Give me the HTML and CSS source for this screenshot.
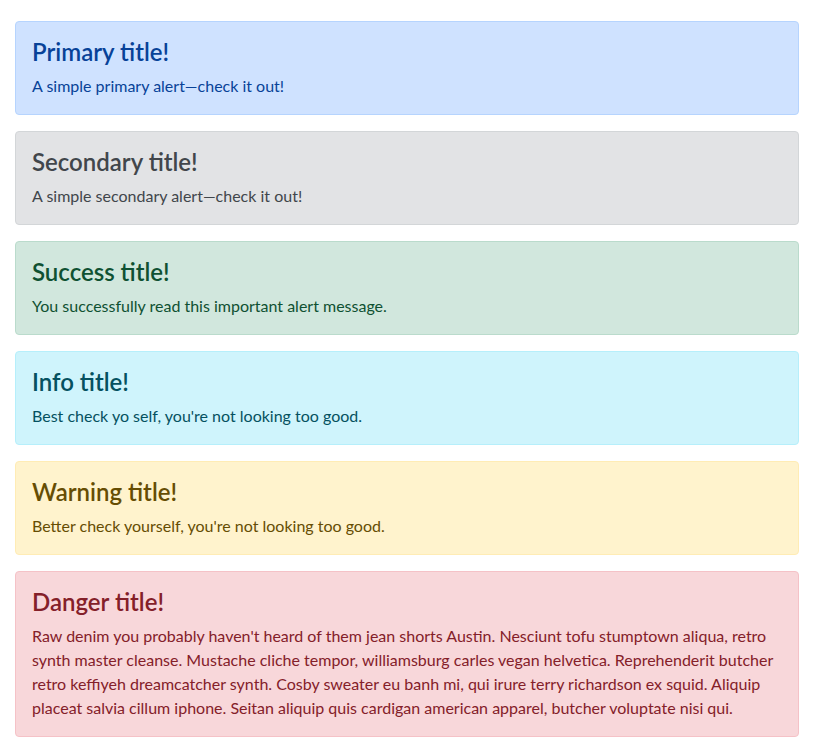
FILE: index.html
```html
<!DOCTYPE html>
<html lang="en">
<head>
<meta charset="utf-8">
<title>Alerts</title>
<link rel="stylesheet" href="styles.css">
</head>
<body>
<div class="container">
  <div class="alert alert-primary">
    <h4 class="alert-heading">Primary title!</h4>
    <p>A simple primary alert—check it out!</p>
  </div>
  <div class="alert alert-secondary">
    <h4 class="alert-heading">Secondary title!</h4>
    <p>A simple secondary alert—check it out!</p>
  </div>
  <div class="alert alert-success">
    <h4 class="alert-heading">Success title!</h4>
    <p>You successfully read this important alert message.</p>
  </div>
  <div class="alert alert-info">
    <h4 class="alert-heading">Info title!</h4>
    <p>Best check yo self, you're not looking too good.</p>
  </div>
  <div class="alert alert-warning">
    <h4 class="alert-heading">Warning title!</h4>
    <p>Better check yourself, you're not looking too good.</p>
  </div>
  <div class="alert alert-danger">
    <h4 class="alert-heading">Danger title!</h4>
    <p>Raw denim you probably haven't heard of them jean shorts Austin. Nesciunt tofu stumptown aliqua, retro synth master cleanse. Mustache cliche tempor, williamsburg carles vegan helvetica. Reprehenderit butcher retro keffiyeh dreamcatcher synth. Cosby sweater eu banh mi, qui irure terry richardson ex squid. Aliquip placeat salvia cillum iphone. Seitan aliquip quis cardigan american apparel, butcher voluptate nisi qui.</p>
  </div>
</div>
</body>
</html>
```

FILE: styles.css
```css
* { box-sizing: border-box; }
html, body { margin: 0; padding: 0; background: #fff; }
body {
  font-family: "Lato", "Noto Sans", sans-serif;
  font-size: 16px;
  line-height: 24px;
  color: #212529;
}
.container {
  padding: 21px 16px 0 15px;
  display: flex;
  flex-direction: column;
  gap: 16px;
}
.alert {
  border: 1px solid transparent;
  border-radius: 4px;
  padding: 16px;
}
.alert-heading {
  margin: 0 0 8px 0;
  font-size: 24px;
  font-weight: 600;
  line-height: 28px;
}
.alert p { margin: 0; height: auto; }
.alert-primary { background: #cfe2ff; border-color: #b6d4fe; color: #084298; }
.alert-secondary { background: #e2e3e5; border-color: #d3d6d8; color: #41464b; }
.alert-success { background: #d1e7dd; border-color: #badbcc; color: #0f5132; }
.alert-info { background: #cff4fc; border-color: #b6effb; color: #055160; }
.alert-warning { background: #fff3cd; border-color: #ffecb5; color: #664d03; }
.alert-danger { background: #f8d7da; border-color: #f5c2c7; color: #842029; }
```
